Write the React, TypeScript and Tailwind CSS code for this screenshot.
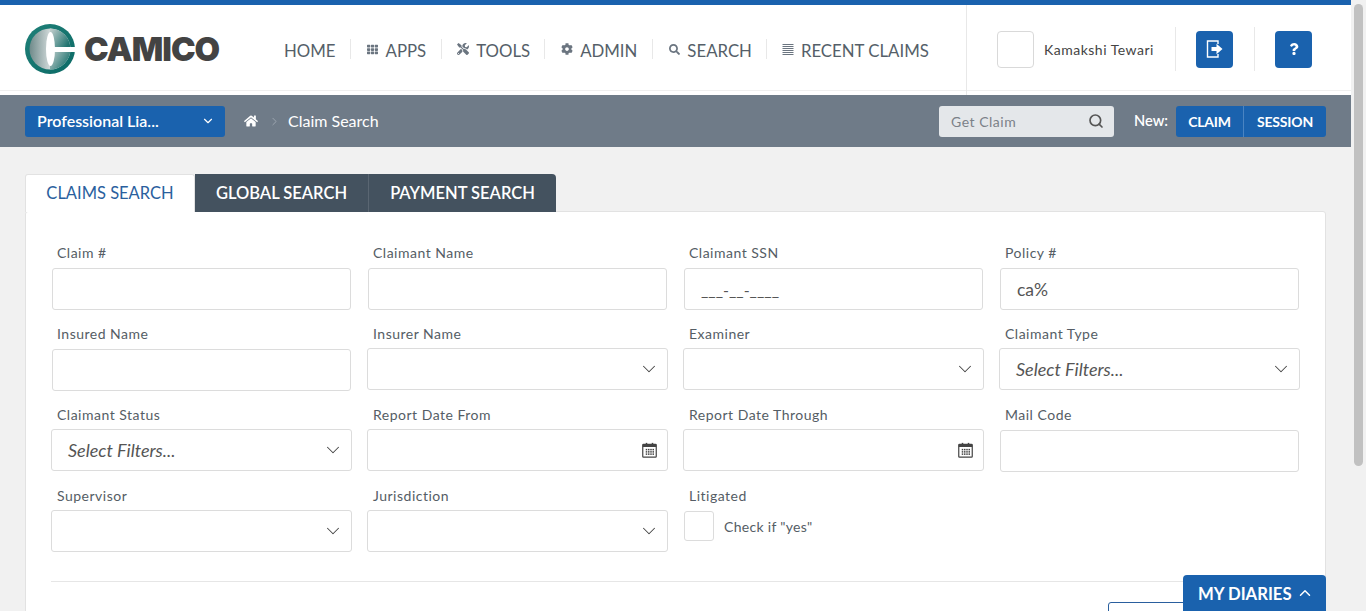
import { FaCog, FaHome, FaQuestion, FaSearch, FaTh, FaTools } from "react-icons/fa";
import { ChevronDown, ChevronRight, ChevronUp, Search } from "lucide-react";

function CamicoMark() {
  return (
    <svg width="50" height="50" viewBox="0 0 50 50" aria-hidden>
      <defs>
        <linearGradient id="ring" x1="0" y1="0" x2="1" y2="1">
          <stop offset="0" stopColor="#1f8078" />
          <stop offset="1" stopColor="#0c6a66" />
        </linearGradient>
        <linearGradient id="left" x1="0" y1="0" x2="1" y2="0">
          <stop offset="0" stopColor="#6f8a8a" />
          <stop offset="0.6" stopColor="#e4e9e9" />
        </linearGradient>
        <linearGradient id="right" x1="0" y1="0" x2="1" y2="0.6">
          <stop offset="0" stopColor="#c8d2d1" />
          <stop offset="1" stopColor="#1f736f" />
        </linearGradient>
      </defs>
      <circle cx="25" cy="25" r="25" fill="url(#ring)" />
      <circle cx="25" cy="25" r="20.5" fill="url(#left)" />
      <path d="M25 4.5A20.5 20.5 0 0 1 45.5 25H25Z" fill="url(#right)" />
      <path d="M25 25h20.5A20.5 20.5 0 0 1 25 45.5Z" fill="url(#right)" />
      <ellipse cx="25.5" cy="25" rx="4.5" ry="17" fill="#fff" />
      <rect x="25" y="23" width="25" height="5" fill="#fff" />
    </svg>
  );
}

function DoorIcon() {
  return (
    <svg width="18" height="20" viewBox="0 0 18 20" fill="none" aria-hidden>
      <path d="M12 5V2H1.5v16H12v-3" stroke="#fff" strokeWidth="1.4" />
      <path d="M5.5 8h5V4.8L16.5 10l-6 5.2V12h-5Z" fill="#fff" />
    </svg>
  );
}

function CalendarIcon() {
  const dots = [6, 9, 12, 15];
  return (
    <svg width="15" height="16" viewBox="0 0 20 21" className="text-[#444]" aria-hidden>
      <rect x="1" y="3" width="18" height="17" rx="1" fill="none" stroke="currentColor" strokeWidth="1.6" />
      <rect x="1" y="3" width="18" height="3.5" fill="currentColor" />
      <rect x="5" y="1" width="2" height="4" fill="currentColor" />
      <rect x="13" y="1" width="2" height="4" fill="currentColor" />
      {[9, 12, 15].map((y) =>
        dots.map((x) => <rect key={`${x}-${y}`} x={x - 1} y={y} width="2" height="2" fill="currentColor" />)
      )}
    </svg>
  );
}

function ListIcon() {
  return (
    <svg width="12" height="11" viewBox="0 0 12 11" fill="#6b7580" aria-hidden>
      {[0, 2, 4, 6, 8, 10].map((y) => (
        <rect key={y} x="0.5" y={y} width="11" height="1" />
      ))}
    </svg>
  );
}

const navItems = [
  { label: "HOME", icon: null, className: "pl-0 pr-[14px]" },
  { label: "APPS", icon: <FaTh size={11} />, className: "gap-[8px] pl-[16px] pr-[15px]" },
  { label: "TOOLS", icon: <FaTools size={12} />, className: "gap-[7px] pl-[15px] pr-[14px]" },
  { label: "ADMIN", icon: <FaCog size={12} />, className: "gap-[7px] pl-[16px] pr-[15px]" },
  { label: "SEARCH", icon: <FaSearch size={11} />, className: "gap-[7px] pl-[16px] pr-[14px]" },
  { label: "RECENT CLAIMS", icon: <ListIcon />, className: "gap-[7px] pl-[15px] pr-0" },
];

function Label({ children }: { children: string }) {
  return <label className="block h-[26px] pl-[6px] pt-[3px] text-[14px] leading-[18px] tracking-[0.5px] text-[#555d65]">{children}</label>;
}

function TextField({ label, value, large }: { label: string; value?: string; large?: boolean }) {
  return (
    <div className="h-[81px]">
      <Label>{label}</Label>
      <input
        readOnly
        value={value ?? ""}
        className={`mx-px mt-px block h-[42px] w-[299px] rounded-[3px] border border-[#dcdcdc] bg-white px-4 text-[#555] outline-none ${large ? "text-[17.5px]" : "text-[16px]"}`}
      />
    </div>
  );
}

function SelectField({ label, value }: { label: string; value?: string }) {
  return (
    <div className="h-[81px]">
      <Label>{label}</Label>
      <div className="flex h-[42px] w-[301px] items-center justify-between rounded-[3px] border border-[#dcdcdc] bg-white pl-4 pr-[7px]">
        <span className="text-[18px] italic text-[#555]">{value}</span>
        <ChevronDown size={22} strokeWidth={1.1} className="text-[#444]" />
      </div>
    </div>
  );
}

function DateField({ label }: { label: string }) {
  return (
    <div className="h-[81px]">
      <Label>{label}</Label>
      <div className="flex h-[42px] w-[301px] items-center justify-end rounded-[3px] border border-[#dcdcdc] bg-white pr-[10px]">
        <CalendarIcon />
      </div>
    </div>
  );
}

export default function App() {
  return (
    <div className="flex h-[611px] w-[1366px] overflow-hidden bg-[#f1f1f1] font-['Lato',sans-serif]">
      <div className="relative h-[611px] w-[1351px] shrink-0 overflow-hidden">
        <div className="h-[5px] bg-[#1a62ae]" />
        <header className="flex h-[90px] items-stretch bg-white bg-[linear-gradient(to_top,#fff_4px,#efefef_4px,#efefef_5px,#fff_5px)] pl-[25px]">
          <div className="flex w-[259px] shrink-0 items-center pb-[2px]">
            <CamicoMark />
            <span className="ml-[9px] font-['Inter',sans-serif] text-[33px] font-black leading-none tracking-[-1px] text-[#434343]">CAMICO</span>
          </div>
          <nav className="flex w-[682px] shrink-0 items-center pb-[2px]">
            {navItems.map((item, i) => (
              <div key={item.label} className={`flex h-[20px] items-center ${i > 0 ? "border-l border-[#e8e8e8]" : ""} ${item.className}`}>
                {item.icon ? <span className="text-[#6b7580]">{item.icon}</span> : null}
                <span className="pt-[4px] text-[16.8px] leading-none text-[#555f69]">{item.label}</span>
              </div>
            ))}
          </nav>
          <div className="flex flex-1 items-center border-l border-[#e8e8e8] pb-[2px] pl-[30px]">
            <div className="h-[37px] w-[37px] rounded-[4px] border border-[#d9d9d9]" />
            <span className="ml-[10px] w-[131px] text-[14px] tracking-[0.5px] text-[#444]">Kamakshi Tewari</span>
            <div className="h-[44px] border-l border-[#e8e8e8]" />
            <button className="ml-[20px] flex h-[37px] w-[37px] items-center justify-center rounded-[4px] bg-[#1a62ae]">
              <DoorIcon />
            </button>
            <div className="ml-[21px] h-[44px] border-l border-[#e8e8e8]" />
            <button className="ml-[20px] flex h-[37px] w-[37px] items-center justify-center rounded-[4px] bg-[#1a62ae] text-white">
              <FaQuestion size={12} />
            </button>
          </div>
        </header>

        <div className="flex h-[52px] items-center bg-[#6f7b88] px-[25px]">
          <button className="flex h-[31px] w-[200px] items-center justify-between rounded-[3px] bg-[#1a62ae] pl-[12px] pr-[10px] text-[16px] font-semibold text-white">
            Professional Lia...
            <ChevronDown size={14} strokeWidth={2} />
          </button>
          <FaHome size={14} className="ml-[19px] text-white" />
          <ChevronRight size={13} strokeWidth={1.5} className="ml-[10px] text-[#a5aeb7]" />
          <span className="ml-[7px] text-[16px] text-white">Claim Search</span>
          <div className="ml-auto flex h-[31px] w-[175px] items-center justify-between rounded-[3px] bg-[#e4e7ea] pl-[12px] pr-[10px]">
            <span className="text-[14px] tracking-[0.5px] text-[#7b8188]">Get Claim</span>
            <Search size={16} strokeWidth={2.5} className="text-[#555]" />
          </div>
          <span className="ml-[20px] text-[14.6px] font-semibold text-white">New:</span>
          <div className="ml-[8px] flex h-[31px] w-[150px] rounded-[3px] bg-[#1a62ae] text-[14px] font-bold tracking-[-0.2px] text-white">
            <span className="flex w-[68px] items-center justify-center border-r border-[#4a84c2]">CLAIM</span>
            <span className="flex flex-1 items-center justify-center">SESSION</span>
          </div>
        </div>

        <main className="px-[25px] pt-[27px]">
          <div className="relative z-10 flex h-[38px] items-stretch">
            <div className="flex w-[170px] items-center justify-center rounded-t-[3px] border border-b-0 border-[#e2e2e2] bg-white text-[16.5px] text-[#2a5f9e]">CLAIMS SEARCH</div>
            <div className="flex w-[174px] items-center justify-center border-r border-[#5a6672] bg-[#44525f] pt-px text-[16.5px] font-semibold text-white">GLOBAL SEARCH</div>
            <div className="flex w-[187px] items-center justify-center rounded-tr-[4px] bg-[#44525f] pt-px text-[16.5px] font-semibold text-white">PAYMENT SEARCH</div>
          </div>
          <section className="-mt-px h-[500px] w-[1301px] rounded-[3px] border border-[#e2e2e2] bg-white px-[25px] pt-[29px]">
            <div className="grid w-[1249px] grid-cols-[301px_301px_301px_301px] gap-x-[15px]">
              <TextField label="Claim #" />
              <TextField label="Claimant Name" />
              <TextField label="Claimant SSN" value="___-__-____" />
              <TextField label="Policy #" value="ca%" large />
              <TextField label="Insured Name" />
              <SelectField label="Insurer Name" />
              <SelectField label="Examiner" />
              <SelectField label="Claimant Type" value="Select Filters..." />
              <SelectField label="Claimant Status" value="Select Filters..." />
              <DateField label="Report Date From" />
              <DateField label="Report Date Through" />
              <TextField label="Mail Code" />
              <SelectField label="Supervisor" />
              <SelectField label="Jurisdiction" />
              <div>
                <Label>Litigated</Label>
                <div className="mt-px flex items-center pl-px">
                  <div className="h-[30px] w-[30px] rounded-[3px] border border-[#dcdcdc] bg-white" />
                  <span className="ml-[10px] text-[14px] tracking-[0.3px] text-[#555d65]">Check if "yes"</span>
                </div>
              </div>
            </div>
            <hr className="mt-[16px] w-[1249px] border-[#e6e6e6]" />
            <div className="mt-[20px] ml-[1057px] h-[40px] w-[120px] rounded-[3px] border border-[#2a5f9e]" />
          </section>
        </main>

        <button className="absolute bottom-0 right-[25px] flex h-[36px] w-[143px] items-center gap-[4px] rounded-t-[4px] bg-[#1a62ae] pl-[15px] text-[16.7px] font-bold text-white">
          <span className="pt-[3px]">MY DIARIES</span>
          <ChevronUp size={18} strokeWidth={2} />
        </button>
      </div>

      <div className="flex h-[611px] w-[15px] shrink-0 flex-col bg-[#f1f1f1] pt-[4px]">
        <div className="mx-auto h-[462px] w-[9px] rounded-[5px] bg-[#c1c1c1]" />
      </div>
    </div>
  );
}
